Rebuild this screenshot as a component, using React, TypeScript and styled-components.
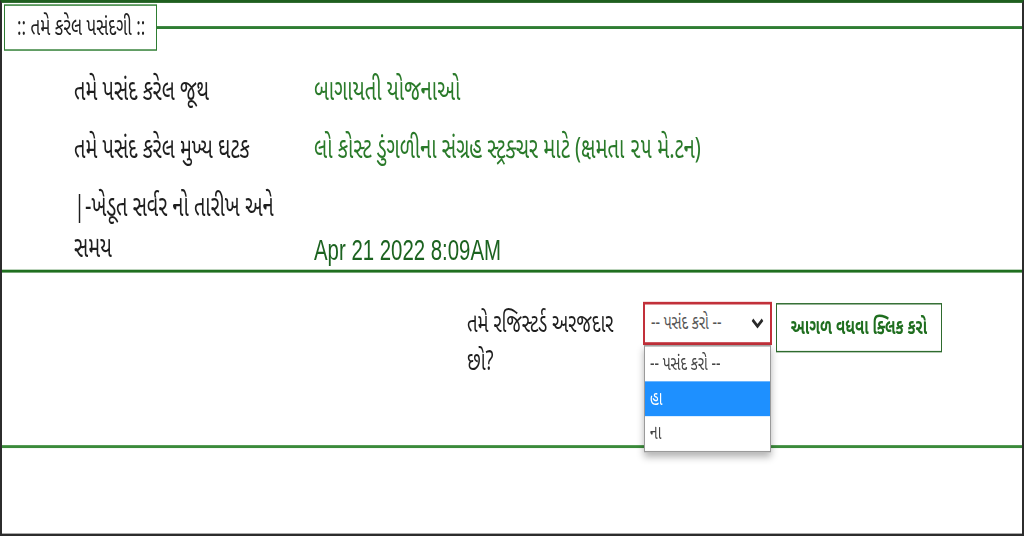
import React from 'react';
import styled, { createGlobalStyle } from 'styled-components';

const STRETCH = 1.45;

const GlobalStyle = createGlobalStyle`
    html, body {
        margin: 0;
        padding: 0;
        background: #ffffff;
    }
    body {
        width: 1024px;
        height: 536px;
        overflow: hidden;
        font-family: "Noto Sans Gujarati", "Noto Sans", "Liberation Sans", Arial, sans-serif;
    }
`;

// the page is rendered at its natural height and stretched vertically, as in the capture
const Stage = styled.div`
    width: 1024px;
    height: ${536 / STRETCH}px;
    transform: scaleY(${STRETCH});
    transform-origin: top left;
`;

const Frame = styled.div`
    box-sizing: border-box;
    height: 100%;
    border: 2px solid #2c2c2c;
    border-top: 2px solid #1f5f1f;
    display: flex;
    flex-direction: column;
`;

const LegendRow = styled.div`
    display: flex;
    align-items: center;
    padding: 1px 0 0 2px;
`;

const Legend = styled.div`
    border: 1.5px solid #2e7d32;
    padding: 5px 11px 3px 12px;
    font-size: 17px;
    color: #222;
    white-space: nowrap;
`;

const Rule = styled.div`
    flex: 1;
    height: 1.5px;
    background: #2e7d32;
`;

const Details = styled.div`
    display: grid;
    grid-template-columns: 240px 1fr;
    row-gap: 12px;
    padding: 15px 0 0 72px;
`;

const Label = styled.div`
    font-size: 20px;
    line-height: 28px;
    color: #1e1e1e;
`;

const Value = styled.div<{ latin?: boolean }>`
    align-self: end;
    font-size: ${({ latin }) => (latin ? '20.4px' : '20.2px')};
    line-height: 28px;
    color: ${({ latin }) => (latin ? '#1c6320' : '#2a7a2a')};
    font-family: ${({ latin }) =>
        latin ? '"Liberation Sans", Arial, sans-serif' : 'inherit'};
`;

const Separator = styled.div<{ weight: number; tone: string }>`
    height: ${({ weight }) => weight}px;
    background: ${({ tone }) => tone};
`;

const Question = styled.div`
    display: flex;
    align-items: flex-start;
    padding: 20px 0 0 465px;
    height: 119px;
    box-sizing: border-box;
`;

const QuestionText = styled.div`
    width: 176px;
    font-size: 18.5px;
    line-height: 25.5px;
    color: #1e1e1e;
    padding-top: 4px;
`;

const SelectWrap = styled.div`
    position: relative;
    width: 129px;
`;

const SelectBox = styled.div`
    box-sizing: border-box;
    height: 30px;
    border: 2px solid #c2303a;
    display: flex;
    align-items: center;
    justify-content: space-between;
    padding: 0 6px 0 6px;
    font-size: 14px;
    color: #555;
    background: #fff;
`;

const Options = styled.div`
    position: absolute;
    top: 30px;
    left: 1px;
    right: 1px;
    background: #fff;
    border: 1px solid #9a9a9a;
    box-shadow: 0 3px 6px rgba(0, 0, 0, 0.3);
    z-index: 2;
`;

const Option = styled.div<{ active?: boolean }>`
    height: 24px;
    display: flex;
    align-items: center;
    padding: 0 5px;
    font-size: 14px;
    color: ${({ active }) => (active ? '#fff' : '#444')};
    background: ${({ active }) => (active ? '#1e90ff' : 'transparent')};
`;

const NextButton = styled.button`
    margin-left: 4px;
    margin-top: 1px;
    width: 166px;
    height: 34px;
    border: 1.5px solid #2e6b2e;
    background: #fff;
    color: #1f6e1f;
    font-family: inherit;
    font-size: 15px;
    font-weight: 700;
    padding: 0;
`;

const Chevron = () => (
    <svg width="13" height="8" viewBox="0 0 13 8">
        <path d="M1.5 1.5 L6.5 6 L11.5 1.5" fill="none" stroke="#2a2a2a" strokeWidth="2.4" />
    </svg>
);

export default function App() {
    return (
        <>
            <GlobalStyle />
            <Stage>
                <Frame>
                    <LegendRow>
                        <Legend>:: તમે કરેલ પસંદગી ::</Legend>
                        <Rule />
                    </LegendRow>
                    <Details>
                        <Label>તમે પસંદ કરેલ જૂથ</Label>
                        <Value>બાગાયતી યોજનાઓ</Value>
                        <Label>તમે પસંદ કરેલ મુખ્ય ઘટક</Label>
                        <Value>લો કોસ્ટ ડુંગળીના સંગ્રહ સ્ટ્રક્ચર માટે (ક્ષમતા ૨૫ મે.ટન)</Value>
                        <Label>
                            |-ખેડૂત સર્વર નો તારીખ અને
                            <br />
                            સમય
                        </Label>
                        <Value latin>Apr 21 2022 8:09AM</Value>
                    </Details>
                    <Separator weight={2} tone="#1f6f1f" />
                    <Question>
                        <QuestionText>
                            તમે રજિસ્ટર્ડ અરજદાર
                            <br />
                            છો?
                        </QuestionText>
                        <SelectWrap>
                            <SelectBox>
                                <span>-- પસંદ કરો --</span>
                                <Chevron />
                            </SelectBox>
                            <Options>
                                <Option>-- પસંદ કરો --</Option>
                                <Option active>હા</Option>
                                <Option>ના</Option>
                            </Options>
                        </SelectWrap>
                        <NextButton>આગળ વધવા ક્લિક કરો</NextButton>
                    </Question>
                    <Separator weight={2} tone="#3a8a3a" />
                </Frame>
            </Stage>
        </>
    );
}
